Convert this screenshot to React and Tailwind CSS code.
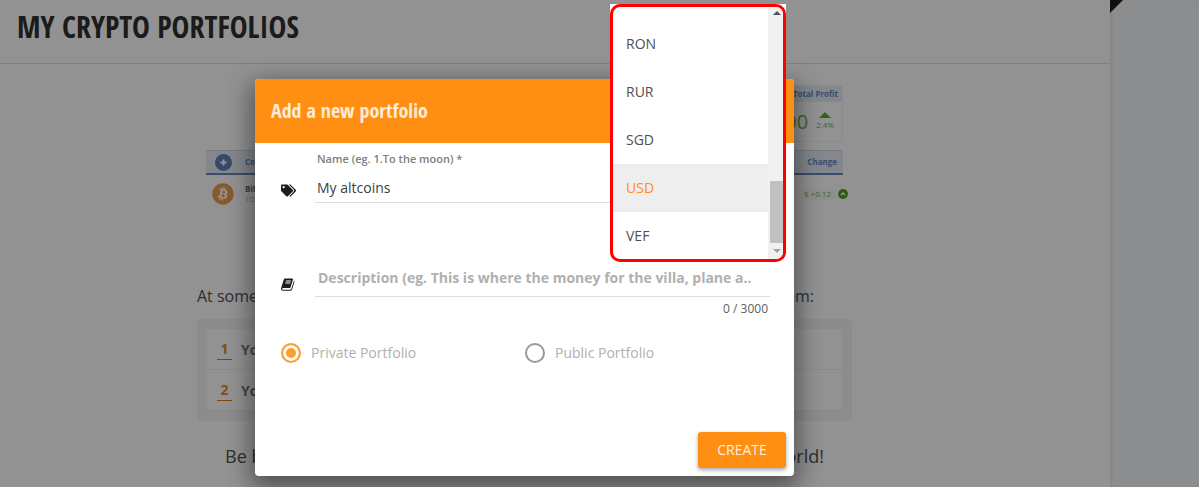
import React, { useState } from "react";
import { FaTags, FaBitcoin } from "react-icons/fa";

const CURRENCIES = ["RON", "RUR", "SGD", "USD", "VEF"];
const STEPS = ["You", "Your"];

function BookIcon() {
  return (
    <svg className="mt-[13px] mr-5 h-[13px] w-[14px] shrink-0" viewBox="0 0 14 13" aria-hidden="true">
      <path d="M4 0.5h7.2q1 0 .7 1L9.6 9.2q-.3.9-1.3.9H2q-1 0-.9.9t1 .8h6.8q1.2 0 1.6-1.2L12.9 2.5q.7.5.5 1.300L11.2 11.3q-.4 1.400-1.900 1.400H2Q0 12.7 0 10.9q0-.6.3-1.300L2.700 1.700Q3 .5 4 .5z" fill="#1c1c1c" />
      <path d="M4.900 3h5M4.300 5h5" stroke="#fff" strokeWidth="1" />
    </svg>
  );
}

function CoinPreview() {
  return (
    <div className="mx-[9px] flex flex-col gap-2 text-[8px]">
      <div className="ml-auto w-[160px] border border-[#f0f0f0]">
        <div className="flex h-4 items-center justify-end bg-[#e3eaf2] pr-1 font-bold text-[#6585bd]">Total Profit</div>
        <div className="flex h-[39px] items-center justify-end gap-2 pr-2 text-[#70b050]">
          <span className="text-[20px]">$ 1,200</span>
          <span className="flex flex-col items-center">
            <svg className="h-[6px] w-3" viewBox="0 0 12 6" aria-hidden="true"><path d="M6 0l6 6H0z" fill="#5ea53c" /></svg>
            <span className="leading-[14px]">2.4%</span>
          </span>
        </div>
      </div>
      <div>
        <div className="flex h-[25px] items-center border-t border-b-2 border-t-[#d0d4d8] border-b-[#6585bd] bg-[#e3eaf2] px-[6px] font-bold text-[#6585bd]">
          <span className="flex w-[33px] pl-[3px]">
            <svg className="size-[17px]" viewBox="0 0 17 17" aria-hidden="true">
              <circle cx="8.500" cy="8.500" r="8.500" fill="#6080b4" />
              <path d="M8.500 5.500v6M5.500 8.500h6" stroke="#fff" strokeWidth="2" />
            </svg>
          </span>
          <span>Coin</span>
          <span className="ml-auto">Change</span>
        </div>
        <div className="-mr-2 flex h-[38px] items-center pl-[6px]">
          <span className="w-[33px]"><FaBitcoin className="size-[22px] text-[#e89c4c]" /></span>
          <span className="flex flex-col leading-[11px]">
            <b className="text-[#666]">Bitcoin</b>
            <span className="text-[7px] text-[#aaa]">1Day</span>
          </span>
          <span className="ml-auto mr-[3px] rounded bg-[#f7f7f7] px-1 text-[#70b050]">$ +0.12</span>
          <svg className="mr-[3px] size-[10px]" viewBox="0 0 10 10" aria-hidden="true">
            <circle cx="5" cy="5" r="5" fill="#4f9f2c" />
            <path d="M3 6l2-2 2 2" fill="none" stroke="#fff" strokeWidth="1.400" />
          </svg>
        </div>
      </div>
    </div>
  );
}

function Page() {
  return (
    <div className="flex min-h-[487px]">
      <main className="min-w-0 flex-1 bg-[#fcfcfc]">
        <header className="flex h-16 items-center border-b border-[#dcdcdc] px-[17px] pb-[10px]">
          <h1 className="font-['Open_Sans_Condensed','Liberation_Sans_Narrow','Open_Sans',sans-serif] text-[30px] font-bold text-[#303030]">MY CRYPTO PORTFOLIOS</h1>
        </header>
        <div className="mr-[61px] flex justify-center pt-[21px]">
          <div className="w-[655px]">
            <CoinPreview />
            <div className="mt-[71px] flex h-6 items-center justify-between pr-[38px] text-[16px] text-[#505050]">
              <span>At some point</span>
              <span>them:</span>
            </div>
            <ol className="mt-[11px] rounded bg-[#f2f2f2] p-[10px]">
              {STEPS.map((step, i) => (
                <li key={step} className="flex h-[41px] items-center gap-[9px] border-b border-[#eeeeee] bg-[#fcfcfc] px-[10px] text-[14px] font-bold text-[#777]">
                  <span className="w-[15px] border-b border-[#e07a00] text-center text-[#e08a20]">{i + 1}</span>
                  {step}
                </li>
              ))}
            </ol>
            <div className="mt-[23px] flex justify-between px-7 text-[18px] leading-6 text-[#505050]">
              <span>Be bold</span>
              <span>world!</span>
            </div>
          </div>
        </div>
      </main>
      <aside className="w-[90px] border-r border-white bg-[#f0f3f6] shadow-[inset_2px_0_3px_rgba(0,0,0,0.06)]">
        <svg className="h-[13px] w-[13px]" viewBox="0 0 13 13" aria-hidden="true"><path d="M0 0h13L0 13z" fill="#1c1c1c" /></svg>
      </aside>
    </div>
  );
}

function CurrencyMenu({ value, onChange }) {
  return (
    <div className="absolute -top-[75px] right-2 w-[176px] bg-white">
      <div className="flex h-[258px] overflow-hidden rounded-[10px] border-[3px] border-[#ff0000]">
        <div role="listbox" aria-label="Currency" className="flex flex-1 flex-col pt-[13px]">
          {CURRENCIES.map((code) => (
            <button
              key={code}
              type="button"
              role="option"
              aria-selected={code === value}
              onClick={() => onChange(code)}
              className={
                code === value
                  ? "h-12 shrink-0 bg-[#eeeeee] px-[13px] pb-[2px] text-left text-[14px] text-[#ff8f12]"
                  : "h-12 shrink-0 px-[13px] pb-[2px] text-left text-[14px] text-[#505050]"
              }
            >
              {code}
            </button>
          ))}
        </div>
        <div className="flex w-[15px] flex-col items-center bg-[#f1f1f1] pt-1 pb-[6px]" aria-hidden="true">
          <svg className="ml-[2px] h-1 w-2" viewBox="0 0 8 4"><path d="M4 0l4 4H0z" fill="#505050" /></svg>
          <span className="mt-auto mb-[6px] h-[62px] w-[13px] self-end bg-[#c1c1c1]" />
          <svg className="ml-[2px] h-1 w-2" viewBox="0 0 8 4"><path d="M0 0h8L4 4z" fill="#a3a3a3" /></svg>
        </div>
      </div>
    </div>
  );
}

function Visibility({ label, value, current, onChange }) {
  const id = `visibility-${value}`;
  return (
    <div className="flex items-center gap-[10px] text-[14px] leading-5 text-[#b0b0b0]">
      <input
        id={id}
        type="radio"
        name="visibility"
        value={value}
        checked={current === value}
        onChange={() => onChange(value)}
        className="size-5 appearance-none rounded-full border-2 border-[#999] checked:border-[#ff9b30] checked:bg-[#ff9b30] checked:shadow-[inset_0_0_0_3px_#fff]"
      />
      <label htmlFor={id}>{label}</label>
    </div>
  );
}

export default function App() {
  const [name, setName] = useState("My altcoins");
  const [description, setDescription] = useState("");
  const [currency, setCurrency] = useState("USD");
  const [visibility, setVisibility] = useState("private");

  return (
    <div className="relative font-['Open_Sans',sans-serif]">
      <Page />
      <div className="absolute inset-y-0 right-px left-0 flex items-start justify-center bg-black/42 pt-[79px] pr-[150px]">
        <form
          role="dialog"
          aria-labelledby="dialog-title"
          onSubmit={(e) => e.preventDefault()}
          className="relative w-[539px] rounded bg-white shadow-[0_8px_24px_4px_rgba(0,0,0,0.45)]"
        >
          <div className="flex h-16 items-center rounded-t bg-[#ff8f12] px-4">
            <h2 id="dialog-title" className="font-['Open_Sans_Condensed','Liberation_Sans_Narrow','Open_Sans',sans-serif] text-[20px] font-bold text-[#ffecd6]">Add a new portfolio</h2>
          </div>

          <div className="flex items-start pt-2 pr-[182px] pl-[26px]">
            <FaTags className="mt-8 mr-[19px] size-[15px] shrink-0 text-[#1c1c1c]" />
            <div className="flex flex-1 flex-col border-b border-[#dddddd]">
              <label htmlFor="name" className="px-[2px] text-[11px] leading-4 font-semibold text-[#808080]">Name (eg. 1.To the moon) *</label>
              <input
                id="name"
                value={name}
                onChange={(e) => setName(e.target.value)}
                className="mt-[6px] h-[29px] px-[2px] text-[14px] text-[#404040] outline-none"
              />
            </div>
          </div>

          <div className="mt-[62px] flex items-start pr-6 pl-[26px]">
            <BookIcon />
            <div className="min-w-0 flex-1">
              <input
                aria-label="Description"
                maxLength={3000}
                value={description}
                onChange={(e) => setDescription(e.target.value)}
                placeholder="Description (eg. This is where the money for the villa, plane a.."
                className="h-8 w-full border-b border-[#dddddd] px-[3px] pb-[6px] text-[14px] font-bold text-[#333] outline-none placeholder:text-[#b0b0b0]"
              />
              <div className="mt-1 pr-[2px] text-right text-[12px] leading-4 text-[#606060]">{description.length} / 3000</div>
            </div>
          </div>

          <div role="radiogroup" aria-label="Visibility" className="mt-[26px] grid grid-cols-[244px_1fr] pl-[26px]">
            <Visibility label="Private Portfolio" value="private" current={visibility} onChange={setVisibility} />
            <Visibility label="Public Portfolio" value="public" current={visibility} onChange={setVisibility} />
          </div>

          <div className="mt-[69px] flex justify-end px-2 pb-2">
            <button type="submit" className="h-9 w-[88px] rounded-[3px] bg-[#ff8f12] pb-px text-[14px] text-[#fff0dd] shadow-[0_2px_4px_rgba(0,0,0,0.35)]">CREATE</button>
          </div>

          <CurrencyMenu value={currency} onChange={setCurrency} />
        </form>
      </div>
    </div>
  );
}
